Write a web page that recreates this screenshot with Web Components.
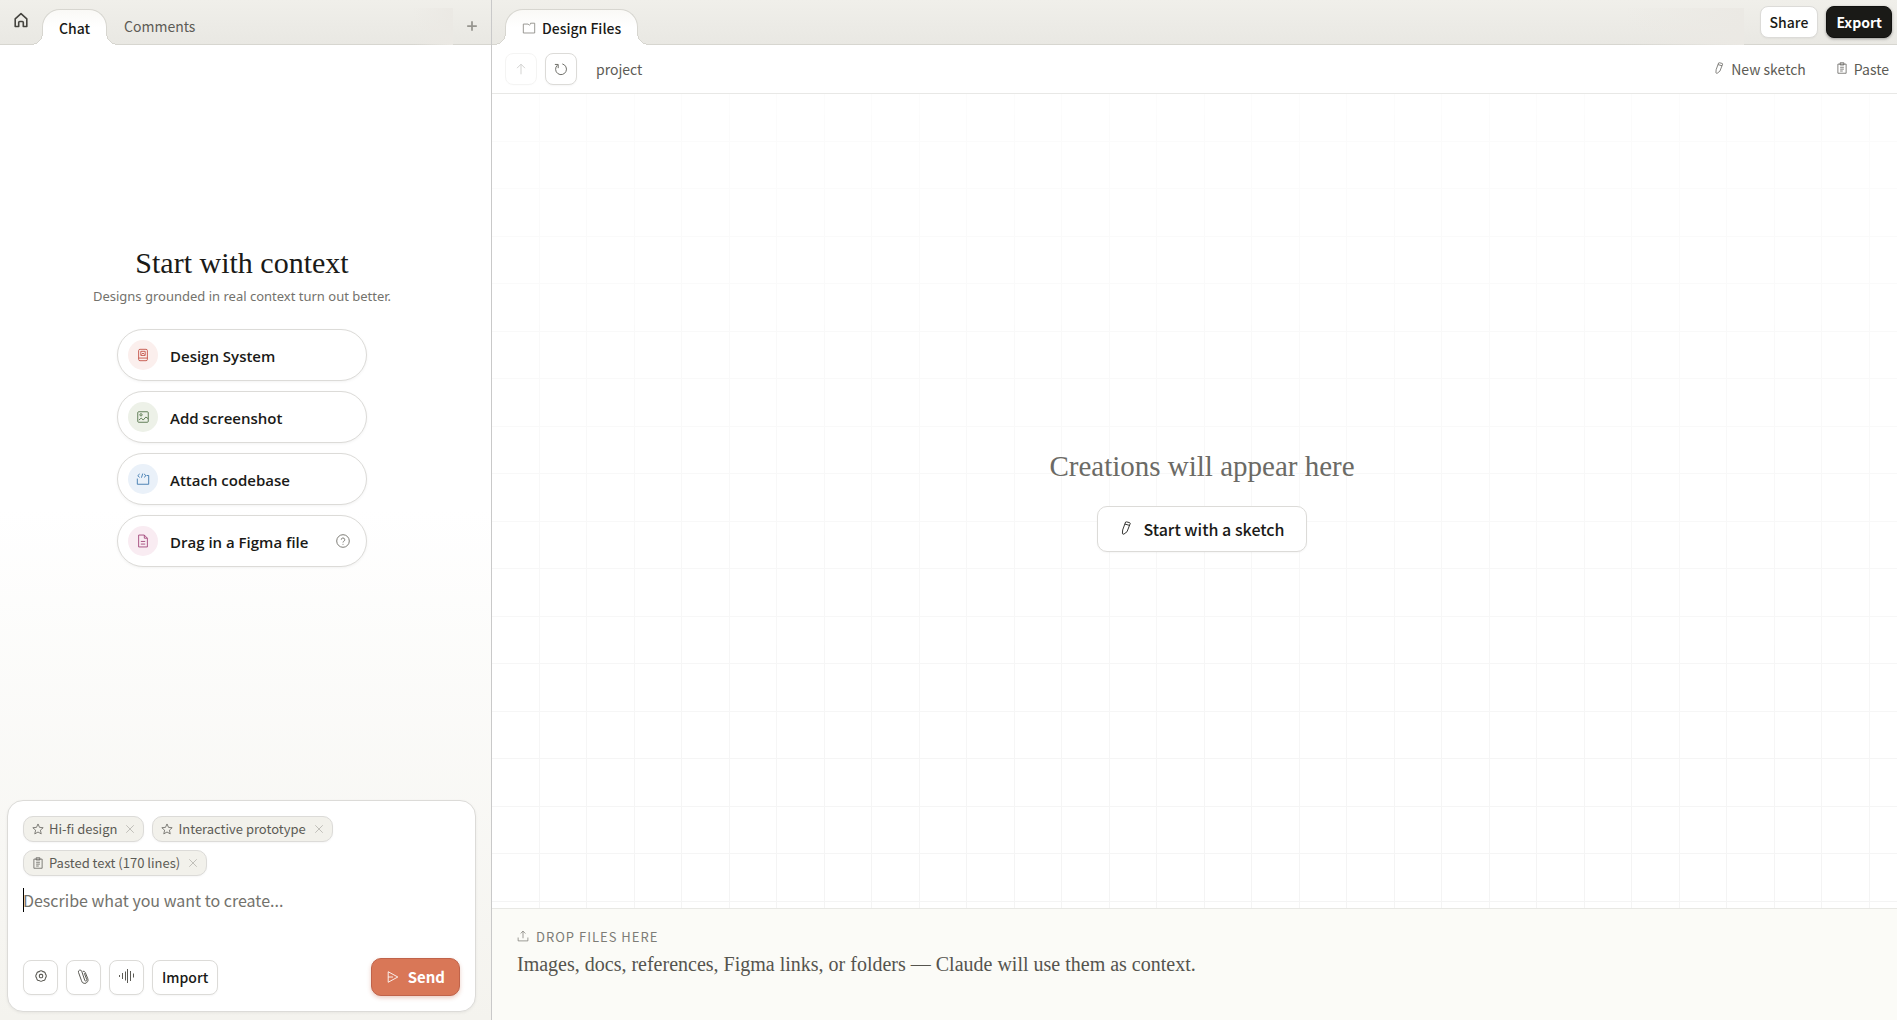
<!DOCTYPE html>
<html lang="en">
<head>
<meta charset="UTF-8">
<meta name="viewport" content="width=device-width, initial-scale=1.0">
<title>Design Files</title>
<style>
    :root {
        --ui: "Noto Sans CJK SC", "Noto Sans", sans-serif;
        --system: "Open Sans", "Noto Sans", sans-serif;
        --serif: "Liberation Serif", serif;
        --ink: #1a1a17;
        --muted: #5c5b55;
        --line: #dcdbd8;
        --bar-line: #d7d6d0;
    }
    html, body {
        height: 100%;
        margin: 0;
    }
    body {
        font: 14px/20px var(--ui);
        color: var(--ink);
        background: #fff;
    }
</style>
</head>
<body>
<design-app></design-app>

<script>
const ICONS = {
    home: '<path d="M2.2 6.800 8 1.600l5.800 5.200v7.700h-3.500V10.500a1 1 0 0 0-1-1H6.700a1 1 0 0 0-1 1v4H2.200z" stroke-width="1.600"/>',
    plus: '<path d="M8 2.500v11M2.500 8h11" stroke-width="2"/>',
    folder: '<path d="M1.500 3.500h5.500l1.300 1.300L9.800 3.500V2.500h4.700v11.200h-13z"/>',
    up: '<path d="M8 14V2.500M3.500 7 8 2.500 12.500 7"/>',
    refresh: '<path d="M9.500 2.200A6.200 6.200 0 1 1 3.800 3.700M4.800 7V2.800H1"/>',
    pencil: '<path d="M7.500 1.200Q8 .8 8.600 1l3.600.9q.8.300.6 1.100L9.200 12.200 5.600 15q-1.600.4-1.700-1l.3-3.800zM6.800 3.500 12 5"/>',
    clipboard: '<path d="M2.500 2.800h11v12.200h-11zM5.500 1h5v3h-5zM5.500 7h5M5.500 9.500h5M5.500 12h3.500"/>',
    book: '<rect x="3" y="1.500" width="10" height="13" rx="1.500"/><path d="M3 11.500h10M5.500 3.800h5v4.700h-5zM6.300 7.300 8 5.800l1.700 1.500"/>',
    image: '<rect x="2" y="2" width="12" height="12" rx="1"/><circle cx="5.700" cy="5.500" r="1.300"/><path d="m3.300 11.500 2.700-2.300 2.200 2.300 3.100-3.500 2.700 2"/>',
    code: '<path d="M1.500 7.500V14h13V4h-2.500M4.200 2.200 2 4.200l2.200 2M7.700 1.800 6.200 6.500M9.200 2.200l2.200 2-2.200 2"/>',
    file: '<path d="M3 1.200h6.500L13 4.800v10H3zM9.500 1.200v3.600H13M5.500 8.500h5M5.500 11.500h5"/>',
    help: '<circle cx="8" cy="8" r="7.200"/><path d="M6 6.500a2 2 0 1 1 2.700 1.900Q8 8.700 8 9.700M8 11.300v1"/>',
    star: '<path d="m8 1.300 2 4.500 4.900.5-3.700 3.300 1.100 4.900L8 12l-4.300 2.500 1.100-4.900L1.100 6.300 6 5.800z"/>',
    close: '<path d="m2 2 12 12m0-12-12 12"/>',
    gear: '<g transform="translate(1.400 1.400) scale(.83)" stroke-width="1.300"><path d="M13.360 10.220A3 3 0 0 1 10.220 13.360A3 3 0 0 1 5.780 13.360A3 3 0 0 1 2.640 10.220A3 3 0 0 1 2.640 5.780A3 3 0 0 1 5.780 2.640A3 3 0 0 1 10.220 2.640A3 3 0 0 1 13.360 5.780A3 3 0 0 1 13.360 10.220z"/><rect x="6" y="6" width="4" height="4" rx="1.300"/></g>',
    clip: '<path d="M8.300 5.200 10.800 11.700a1 1 0 0 1-2 .7L5.700 3.200a1.700 1.700 0 0 0-3.200 1.200l3 8.300a3.200 3.200 0 0 0 6 1q1-1.200.3-3L9.300 4.500Q8.500 2.800 6.800 3.300"/>',
    wave: '<path d="M.5 7v2M3.500 5v6M6.500 3.500v9M8.500 1v14M11.500 3v10M14.500 5.500v4"/>',
    send: '<path d="M2.500 2 13.500 8 2.500 14zM2.500 8H8"/>',
    upload: '<path d="M8 11V1.500M4.800 4.700 8 1.500l3.200 3.200M1.500 10v4.500h13V10"/>'
};

class UiIcon extends HTMLElement {
    connectedCallback() {
        this.attachShadow({ mode: 'open' });
        this.shadowRoot.innerHTML = `
            <style>
                :host { display: inline-flex; flex: none; width: 14px; height: 14px; }
                svg { width: 100%; height: 100%; fill: none; stroke: currentColor; stroke-linejoin: round; }
            </style>
            <svg viewBox="0 0 16 16" aria-hidden="true">${ICONS[this.getAttribute('name')]}</svg>
        `;
    }
}

// Outlined, solid or quiet button; the variant attribute picks the look
class UiButton extends HTMLElement {
    connectedCallback() {
        const label = this.getAttribute('label');
        const disabled = this.hasAttribute('disabled') ? 'disabled' : '';
        this.attachShadow({ mode: 'open' });
        this.shadowRoot.innerHTML = `
            <style>
                :host { display: inline-flex; }
                button {
                    display: flex;
                    align-items: center;
                    justify-content: center;
                    gap: 8px;
                    box-sizing: border-box;
                    height: 32px;
                    padding: 0 9px;
                    border: 1px solid var(--line);
                    border-radius: 8px;
                    background: #fff;
                    box-shadow: 0 1px 2px rgba(0, 0, 0, .04);
                    color: var(--ink);
                    font: 500 14px/20px var(--ui);
                    white-space: nowrap;
                    cursor: pointer;
                }
                :host([variant="icon"]) button { width: 32px; padding: 0; color: var(--muted); }
                :host([variant="tool"]) button { width: 35px; height: 35px; padding: 0; color: var(--muted); }
                :host([variant="tool"]) ::slotted(ui-icon) { width: 16px; height: 16px; margin-bottom: 3px; }
                :host([variant="medium"]) button { height: 35px; }
                :host([variant="large"]) button { height: 46px; padding: 0 21px; border-radius: 10px; gap: 10px; font-size: 16px; }
                :host([variant="dark"]) button {
                    border-color: #11110f;
                    background: #1a1a17;
                    box-shadow: 0 1px 3px rgba(0, 0, 0, .35);
                    color: #fff;
                    font-weight: 700;
                }
                :host([variant="send"]) button {
                    height: 38px;
                    padding: 0 14px;
                    border-color: #c0634a;
                    border-radius: 10px;
                    background: #d97757;
                    box-shadow: 0 2px 4px rgba(190, 90, 60, .3);
                    color: #fff;
                    font-weight: 700;
                    font-size: 15px;
                }
                :host([variant="quiet"]) button {
                    gap: 6px;
                    border: 0;
                    padding: 0;
                    background: none;
                    box-shadow: none;
                    color: var(--muted);
                    font-weight: 400;
                }
                :host([variant="quiet"]) ::slotted(ui-icon) { width: 12px; height: 12px; margin-bottom: 3px; }
                :host([variant="large"]) ::slotted(ui-icon) { margin-bottom: 3px; }
                button:disabled { opacity: .3; cursor: default; }
            </style>
            <button type="button" ${label ? `aria-label="${label}"` : ''} ${disabled}><slot></slot></button>
        `;
    }
}

class TabItem extends HTMLElement {
    connectedCallback() {
        this.attachShadow({ mode: 'open' });
        this.shadowRoot.innerHTML = `
            <style>
                :host { display: flex; position: relative; height: 36px; }
                button {
                    display: flex;
                    align-items: center;
                    gap: 6px;
                    box-sizing: border-box;
                    height: 36px;
                    padding: 0 16px;
                    border: 1px solid transparent;
                    border-bottom: 0;
                    border-radius: 18px 18px 0 0;
                    background: none;
                    color: var(--muted);
                    font: 400 14px/20px var(--ui);
                }
                :host([active]) button {
                    border-color: var(--bar-line);
                    background: linear-gradient(#faf9f6, #fff 50%);
                    color: var(--ink);
                    font-weight: 500;
                }
                :host(:not([active])) button { padding-bottom: 4px; }
                /* flared feet that join the tab to the page below */
                :host([active])::before, :host([active])::after {
                    content: "";
                    position: absolute;
                    bottom: 0;
                    width: 12px;
                    height: 12px;
                }
                :host([active])::before {
                    left: -11px;
                    background: radial-gradient(circle at 0 0, transparent 11px, var(--bar-line) 11px 12px, #fff 12px);
                }
                :host([active])::after {
                    right: -11px;
                    background: radial-gradient(circle at 100% 0, transparent 11px, var(--bar-line) 11px 12px, #fff 12px);
                }
            </style>
            <button type="button" role="tab" aria-selected="${this.hasAttribute('active')}"><slot></slot></button>
        `;
    }
}

class TabStrip extends HTMLElement {
    connectedCallback() {
        this.attachShadow({ mode: 'open' });
        this.shadowRoot.innerHTML = `
            <style>
                :host {
                    display: flex;
                    box-sizing: border-box;
                    height: 45px;
                    border-bottom: 1px solid var(--bar-line);
                    background: linear-gradient(#f0efea, #e9e8e3);
                }
                .tabs { display: flex; flex: 1; align-items: flex-end; margin-bottom: -1px; }
                .fade {
                    width: var(--fade, 60px);
                    height: 37px;
                    margin-left: auto;
                    background: linear-gradient(to right, transparent, #ebe9e4);
                }
            </style>
            <slot name="start"></slot>
            <div class="tabs" role="tablist"><slot></slot><div class="fade"></div></div>
            <slot name="end"></slot>
        `;
    }
}

class ContextOption extends HTMLElement {
    connectedCallback() {
        this.attachShadow({ mode: 'open' });
        this.shadowRoot.innerHTML = `
            <style>
                :host { display: block; }
                button {
                    display: flex;
                    align-items: center;
                    gap: 12px;
                    box-sizing: border-box;
                    width: 100%;
                    height: 52px;
                    padding: 0 16px 0 10px;
                    border: 1px solid var(--line);
                    border-radius: 26px;
                    background: #fff;
                    box-shadow: 0 1px 3px rgba(0, 0, 0, .05);
                    color: var(--ink);
                    font: 600 15px/20px var(--system);
                    text-align: left;
                }
                .badge {
                    display: flex;
                    align-items: center;
                    justify-content: center;
                    width: 30px;
                    height: 30px;
                    border-radius: 50%;
                    background: var(--tint);
                    color: var(--tone);
                }
                .label { flex: 1; padding-top: 2px; }
                ::slotted(ui-icon) { color: #6b6a64; }
            </style>
            <button type="button">
                <span class="badge"><ui-icon name="${this.getAttribute('icon')}"></ui-icon></span>
                <span class="label"><slot></slot></span>
                <slot name="hint"></slot>
            </button>
        `;
    }
}

class ContextChip extends HTMLElement {
    connectedCallback() {
        this.attachShadow({ mode: 'open' });
        this.shadowRoot.innerHTML = `
            <style>
                :host {
                    display: inline-flex;
                    align-items: center;
                    gap: 5px;
                    box-sizing: border-box;
                    height: 26px;
                    padding: 0 8px;
                    border: 1px solid var(--line);
                    border-radius: 10px;
                    background: #f2f1eb;
                    box-shadow: 0 1px 2px rgba(0, 0, 0, .04);
                    color: var(--muted);
                    font: 400 13px/20px var(--ui);
                    white-space: nowrap;
                }
                ui-icon { width: 12px; height: 12px; }
                button {
                    display: flex;
                    margin-left: 3px;
                    padding: 0;
                    border: 0;
                    background: none;
                    color: #a3a29c;
                }
                button ui-icon { width: 10px; height: 10px; }
            </style>
            <ui-icon name="${this.getAttribute('icon')}"></ui-icon>
            <span><slot></slot></span>
            <button type="button" aria-label="Remove"><ui-icon name="close"></ui-icon></button>
        `;
    }
}

class PromptComposer extends HTMLElement {
    connectedCallback() {
        this.attachShadow({ mode: 'open' });
        this.shadowRoot.innerHTML = `
            <style>
                :host {
                    display: block;
                    padding: 15px;
                    border: 1px solid var(--line);
                    border-radius: 16px;
                    background: #fff;
                    box-shadow: 0 1px 3px rgba(0, 0, 0, .06);
                }
                .chips { display: flex; flex-wrap: wrap; gap: 8px; padding-right: 64px; }
                .field { position: relative; display: flex; margin-top: 10px; }
                textarea {
                    box-sizing: border-box;
                    width: 100%;
                    height: 72px;
                    padding: 2px 0;
                    border: 0;
                    outline: 0;
                    resize: none;
                    background: none;
                    color: var(--ink);
                    caret-color: transparent;
                    font: 400 16px/24px var(--ui);
                }
                textarea::placeholder { color: #73726c; opacity: 1; }
                .caret { position: absolute; left: 0; top: 2px; width: 1px; height: 24px; background: #000; }
                .actions { display: flex; align-items: center; gap: 8px; }
                .send { margin-left: auto; }
            </style>
            <div class="chips">
                <context-chip icon="star">Hi-fi design</context-chip>
                <context-chip icon="star">Interactive prototype</context-chip>
                <context-chip icon="clipboard">Pasted text (170 lines)</context-chip>
            </div>
            <div class="field">
                <textarea aria-label="Prompt" placeholder="Describe what you want to create..."></textarea>
                <span class="caret"></span>
            </div>
            <div class="actions">
                <ui-button variant="tool" label="Settings"><ui-icon name="gear"></ui-icon></ui-button>
                <ui-button variant="tool" label="Attach"><ui-icon name="clip"></ui-icon></ui-button>
                <ui-button variant="tool" label="Dictate"><ui-icon name="wave"></ui-icon></ui-button>
                <ui-button variant="medium">Import</ui-button>
                <ui-button variant="send" class="send"><ui-icon name="send"></ui-icon>Send</ui-button>
            </div>
        `;
    }
}

class ChatPanel extends HTMLElement {
    connectedCallback() {
        this.attachShadow({ mode: 'open' });
        this.shadowRoot.innerHTML = `
            <style>
                :host {
                    display: flex;
                    flex-direction: column;
                    box-sizing: border-box;
                    border-right: 1px solid #c9c9c9;
                    background: linear-gradient(#fff 50%, #f4f3ee);
                }
                tab-strip { --fade: 40px; }
                .home, .add { display: flex; padding: 0; border: 0; background: none; }
                .home { padding: 12px 13px 0 13px; color: #45443f; }
                .home ui-icon { width: 16px; height: 16px; }
                .add { align-items: center; padding: 7px 12px 0 12px; color: #96958f; }
                .start {
                    display: flex;
                    flex: 1;
                    flex-direction: column;
                    align-items: center;
                    justify-content: center;
                    padding: 0 15px 33px 8px;
                }
                h1 { margin: 0; font: 400 30px/36px var(--serif); }
                p { margin: 5px 0 23px; color: #73726c; font: 400 13px/20px "Noto Sans", sans-serif; }
                .options { display: grid; gap: 10px; width: 250px; }
                prompt-composer { margin: 0 15px 8px 7px; }
            </style>
            <tab-strip>
                <button class="home" slot="start" type="button" aria-label="Home"><ui-icon name="home"></ui-icon></button>
                <tab-item active>Chat</tab-item>
                <tab-item>Comments</tab-item>
                <button class="add" slot="end" type="button" aria-label="New chat"><ui-icon name="plus"></ui-icon></button>
            </tab-strip>
            <div class="start">
                <h1>Start with context</h1>
                <p>Designs grounded in real context turn out better.</p>
                <div class="options">
                    <context-option icon="book" style="--tint: #fbefed; --tone: #c24f43">Design System</context-option>
                    <context-option icon="image" style="--tint: #edf1e8; --tone: #4f7046">Add screenshot</context-option>
                    <context-option icon="code" style="--tint: #eaf1f9; --tone: #3a76ad">Attach codebase</context-option>
                    <context-option icon="file" style="--tint: #f9ecf2; --tone: #a04478">Drag in a Figma file<ui-icon slot="hint" name="help"></ui-icon></context-option>
                </div>
            </div>
            <prompt-composer></prompt-composer>
        `;
    }
}

class FilesPanel extends HTMLElement {
    connectedCallback() {
        this.attachShadow({ mode: 'open' });
        this.shadowRoot.innerHTML = `
            <style>
                :host { display: flex; flex-direction: column; min-width: 0; background: #fff; }
                tab-strip { --fade: 120px; }
                tab-item { margin-left: 13px; }
                tab-item ui-icon { color: #8d8c86; }
                .actions { display: flex; align-items: flex-start; gap: 8px; padding: 6px 5px 0 16px; }
                .toolbar {
                    display: flex;
                    align-items: center;
                    gap: 8px;
                    height: 48px;
                    padding: 0 8px 0 13px;
                    border-bottom: 1px solid #e8e8e6;
                }
                .path { flex: 1; margin-left: 11px; color: var(--muted); }
                .toolbar .quiet { margin-left: 22px; }
                .canvas {
                    position: relative;
                    display: flex;
                    flex: 1;
                    flex-direction: column;
                    align-items: center;
                    justify-content: center;
                    gap: 23px;
                    padding: 0 0 1px 15px;
                }
                /* two grid cells per 95px tile */
                .canvas::before {
                    content: "";
                    position: absolute;
                    inset: 0;
                    --rule: transparent 47px, #f4f4f4 47px 48px, transparent 48px 94px, #f4f4f4 94px;
                    background:
                        linear-gradient(to right, var(--rule)) 0 0 / 95px 95px,
                        linear-gradient(to bottom, var(--rule)) 0 0 / 95px 95px;
                    mask-image: linear-gradient(rgba(0, 0, 0, .3), #000);
                }
                h2 { position: relative; margin: 0; color: #6b6a65; font: 400 29px/34px var(--serif); }
                .canvas ui-button { position: relative; }
                .drop { height: 112px; box-sizing: border-box; padding: 18px 25px; border-top: 1px solid #e8e8e4; background: #fbfbf7; }
                .drop span { display: flex; align-items: center; gap: 7px; color: #7d7c76; font-size: 13px; letter-spacing: 1px; }
                .drop ui-icon { width: 12px; height: 12px; margin-bottom: 3px; }
                .drop p { margin: 4px 0 0; color: #55544e; font: 400 20px/26px var(--serif); }
            </style>
            <tab-strip>
                <tab-item active><ui-icon name="folder"></ui-icon>Design Files</tab-item>
                <div class="actions" slot="end">
                    <ui-button>Share</ui-button>
                    <ui-button variant="dark">Export</ui-button>
                </div>
            </tab-strip>
            <div class="toolbar">
                <ui-button variant="icon" label="Up" disabled><ui-icon name="up"></ui-icon></ui-button>
                <ui-button variant="icon" label="Refresh"><ui-icon name="refresh"></ui-icon></ui-button>
                <span class="path">project</span>
                <ui-button variant="quiet" class="quiet"><ui-icon name="pencil"></ui-icon>New sketch</ui-button>
                <ui-button variant="quiet" class="quiet"><ui-icon name="clipboard"></ui-icon>Paste</ui-button>
            </div>
            <div class="canvas">
                <h2>Creations will appear here</h2>
                <ui-button variant="large"><ui-icon name="pencil"></ui-icon>Start with a sketch</ui-button>
            </div>
            <div class="drop">
                <span><ui-icon name="upload"></ui-icon>DROP FILES HERE</span>
                <p>Images, docs, references, Figma links, or folders — Claude will use them as context.</p>
            </div>
        `;
    }
}

class DesignApp extends HTMLElement {
    connectedCallback() {
        this.attachShadow({ mode: 'open' });
        this.shadowRoot.innerHTML = `
            <style>
                :host { display: grid; grid-template-columns: 492px 1fr; min-height: 100vh; }
            </style>
            <chat-panel></chat-panel>
            <files-panel></files-panel>
        `;
    }
}

customElements.define('ui-icon', UiIcon);
customElements.define('ui-button', UiButton);
customElements.define('tab-item', TabItem);
customElements.define('tab-strip', TabStrip);
customElements.define('context-option', ContextOption);
customElements.define('context-chip', ContextChip);
customElements.define('prompt-composer', PromptComposer);
customElements.define('chat-panel', ChatPanel);
customElements.define('files-panel', FilesPanel);
customElements.define('design-app', DesignApp);
</script>
</body>
</html>
